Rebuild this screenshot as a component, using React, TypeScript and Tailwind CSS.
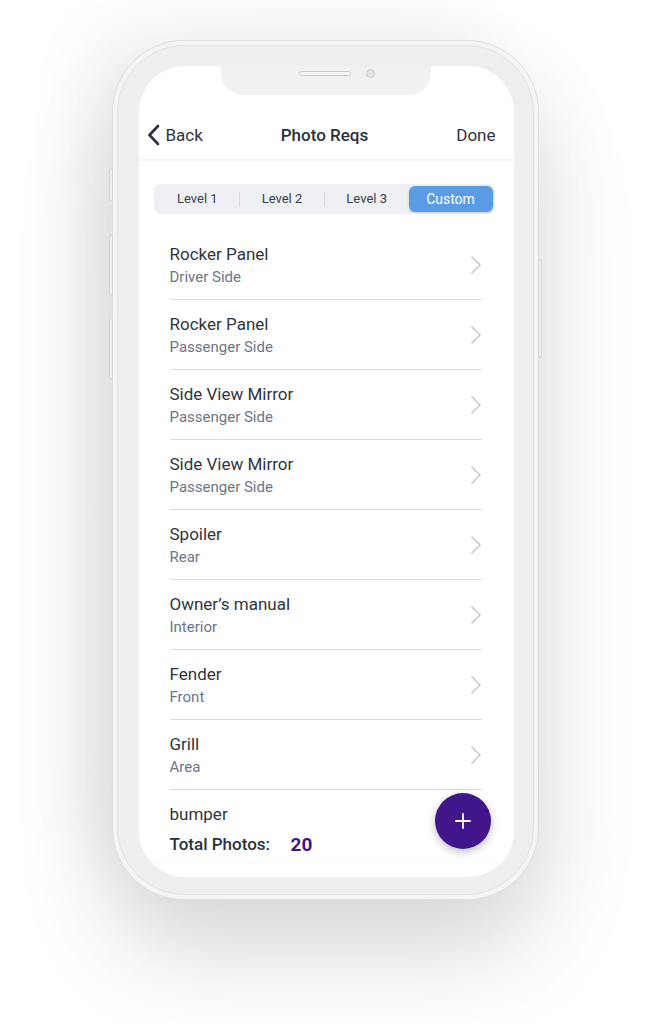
import React from "react";

const rows = [
  { t: "Rocker Panel", s: "Driver Side" },
  { t: "Rocker Panel", s: "Passenger Side" },
  { t: "Side View Mirror", s: "Passenger Side" },
  { t: "Side View Mirror", s: "Passenger Side" },
  { t: "Spoiler", s: "Rear" },
  { t: "Owner’s manual", s: "Interior" },
  { t: "Fender", s: "Front" },
  { t: "Grill", s: "Area" },
  { t: "bumper", s: "Area" },
];

function Chevron() {
  return (
    <svg width="12" height="20" viewBox="0 0 12 20" fill="none">
      <path d="M2 2 L10 10 L2 18" stroke="#c4c8cf" strokeWidth="1.6" strokeLinecap="round" strokeLinejoin="round" />
    </svg>
  );
}

export default function App() {
  return (
    <div
      className="w-[650px] h-[1024px] bg-white flex justify-center pt-[40px] overflow-hidden"
      style={{ fontFamily: "Roboto, 'Noto Sans', Arial, sans-serif" }}
    >
      <div className="relative w-[427px] h-[860px] rounded-[72px] bg-[#f4f5f6] border border-[#dcdee2] p-[4px] shadow-[0_40px_90px_rgba(0,0,0,0.11),-40px_-30px_60px_rgba(0,0,0,0.035),0_60px_120px_rgba(0,0,0,0.07)]">
        {/* side buttons */}
        <div className="absolute left-[-4px] top-[128px] w-[4px] h-[32px] rounded-l-[2px] bg-[#eceef0] border border-[#d3d6da]" />
        <div className="absolute left-[-4px] top-[194px] w-[4px] h-[60px] rounded-l-[2px] bg-[#eceef0] border border-[#d3d6da]" />
        <div className="absolute left-[-4px] top-[277px] w-[4px] h-[61px] rounded-l-[2px] bg-[#eceef0] border border-[#d3d6da]" />
        <div className="absolute right-[-4px] top-[218px] w-[4px] h-[99px] rounded-r-[2px] bg-[#eceef0] border border-[#d3d6da]" />

        <div className="w-full h-full rounded-[68px] bg-[#eeeff1] border border-[#e0e2e5] pt-[20px] pl-[21px] pr-[19px] pb-[17px]">
          <div className="relative w-[375px] h-[811px] rounded-[46px] bg-white overflow-hidden flex flex-col">
            {/* notch */}
            <div className="absolute top-0 left-[82px] w-[210px] h-[29px] bg-[#f0f1f3] rounded-b-[22px] z-10">
              <div className="absolute left-[78px] top-[5px] w-[52px] h-[5px] rounded-full bg-[#f5f6f7] border border-[#c9ccd1]" />
              <div className="absolute left-[145px] top-[3px] w-[9px] h-[9px] rounded-full bg-[#e2e4e7] border border-[#c5c8cd]" />
            </div>

            {/* header */}
            <div className="h-[94px] shrink-0 grid grid-cols-3 items-end pb-[13px] pl-[7px] pr-[18px] shadow-[0_1px_2px_rgba(0,0,0,0.05)] border-b border-[#f2f3f5]">
              <div className="flex items-center gap-[5px] text-[#2e3440]">
                <svg width="15" height="22" viewBox="0 0 15 22" fill="none">
                  <path d="M12 2 L3.5 11 L12 20" stroke="#2b313b" strokeWidth="2.6" strokeLinecap="round" strokeLinejoin="round" />
                </svg>
                <span className="text-[17px] leading-[22px]">Back</span>
              </div>
              <span className="text-center pl-[8px] text-[17px] leading-[22px] font-medium text-[#2b313b] whitespace-nowrap">Photo Reqs</span>
              <span className="text-right text-[17px] leading-[22px] text-[#2e3440]">Done</span>
            </div>

            {/* segmented control */}
            <div className="mt-[24px] mx-[15px] w-[341px] h-[30px] rounded-[7px] bg-[#eef0f3] p-[2px] flex items-center">
              <div className="flex-1 text-center text-[13px] text-[#3b414b]">Level 1</div>
              <div className="w-px h-[15px] bg-[#d7dade]" />
              <div className="flex-1 text-center text-[13px] text-[#3b414b]">Level 2</div>
              <div className="w-px h-[15px] bg-[#d7dade]" />
              <div className="flex-1 text-center text-[13px] text-[#3b414b]">Level 3</div>
              <div className="w-[84px] h-[26px] rounded-[6px] bg-[#5b9be6] flex items-center justify-center text-[14px] text-white shadow-[0_1px_3px_rgba(0,0,0,0.15)]">
                Custom
              </div>
            </div>

            {/* list */}
            <div className="mt-[16px] ml-[31px] mr-[32px] flex flex-col">
              {rows.map((r, i) => (
                <div key={i} className="h-[70px] shrink-0 border-b border-[#d9dce3] flex items-center justify-between">
                  <div className="flex flex-col gap-[2px]">
                    <span className="text-[17px] leading-[22px] text-[#2f3540]">{r.t}</span>
                    <span className="text-[15px] leading-[20px] text-[#6b7587]">{r.s}</span>
                  </div>
                  {i < 8 && <Chevron />}
                </div>
              ))}
            </div>

            {/* footer overlay */}
            <div className="absolute left-0 right-0 top-[762px] h-[34px] bg-white/[0.94] flex items-center pl-[31px] shadow-[0_1px_1px_rgba(0,0,0,0.02)]">
              <span className="text-[17px] font-medium text-[#2b313b] w-[121px]">Total Photos:</span>
              <span className="text-[19px] font-bold text-[#3d1685]">20</span>
            </div>

            {/* FAB */}
            <div className="absolute left-[296px] top-[727px] w-[56px] h-[56px] rounded-full bg-[#40168a] flex items-center justify-center shadow-[0_3px_8px_rgba(0,0,0,0.25)]">
              <svg width="16" height="16" viewBox="0 0 16 16" fill="none">
                <path d="M8 1 V15 M1 8 H15" stroke="white" strokeWidth="1.8" strokeLinecap="round" />
              </svg>
            </div>
          </div>
        </div>
      </div>
    </div>
  );
}
